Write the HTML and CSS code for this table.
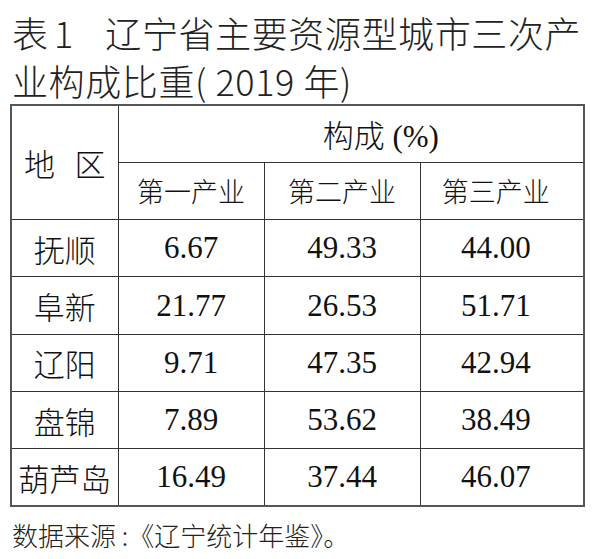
FILE: index.html
```html
<!DOCTYPE html>
<html lang="zh-CN">

<head>
    <meta charset="UTF-8">
    <meta name="viewport" content="width=device-width, initial-scale=1.0">
    <title>辽宁省主要资源型城市三次产业构成比重</title>
    <link rel="stylesheet" href="styles.css">
</head>

<body>

    <h2 class="title">
        <span class="num">表</span><span class="digit">1</span><span class="name">辽宁省主要资源型城市三次产</span>
        <span class="name">业构成比重( 2019 年)</span>
    </h2>

    <table class="data">
        <colgroup>
            <col class="c1">
            <col class="c2">
            <col class="c3">
            <col class="c4">
        </colgroup>
        <tr>
            <th rowspan="2" class="area">地 区</th>
            <th colspan="3" class="group">构成 (%)</th>
        </tr>
        <tr class="sub">
            <th>第一产业</th>
            <th>第二产业</th>
            <th class="last">第三产业</th>
        </tr>
        <tr>
            <td class="city">抚顺</td>
            <td>6.67</td>
            <td>49.33</td>
            <td class="last">44.00</td>
        </tr>
        <tr>
            <td class="city">阜新</td>
            <td>21.77</td>
            <td>26.53</td>
            <td class="last">51.71</td>
        </tr>
        <tr>
            <td class="city">辽阳</td>
            <td>9.71</td>
            <td>47.35</td>
            <td class="last">42.94</td>
        </tr>
        <tr>
            <td class="city">盘锦</td>
            <td>7.89</td>
            <td>53.62</td>
            <td class="last">38.49</td>
        </tr>
        <tr>
            <td class="city">葫芦岛</td>
            <td>16.49</td>
            <td>37.44</td>
            <td class="last">46.07</td>
        </tr>
    </table>

    <p class="source">数据来源 :《辽宁统计年鉴》。</p>

</body>

</html>
```

FILE: styles.css
```css
* {
    margin: 0;
    padding: 0;
    box-sizing: border-box;
}

body {
    width: 600px;
    height: 559px;
    padding: 0 10px;
    background: #fff;
    color: #1a1a1a;
    overflow: hidden;
}

.title {
    display: flex;
    flex-wrap: wrap;
    align-items: baseline;
    padding: 8px 0 0 2px;
    font-family: "Noto Sans CJK SC", sans-serif;
    font-size: 36px;
    font-weight: 300;
    line-height: 48px;
    color: #222;
}

.title .digit {
    margin-left: 6px;
    margin-right: 32px;
}

.title .name {
    letter-spacing: 0.6px;
    white-space: nowrap;
}

.data {
    width: 573px;
    border-collapse: collapse;
    table-layout: fixed;
    border: 2px solid #555;
    font-family: "Liberation Serif", "Noto Sans CJK SC", serif;
    font-weight: 300;
    color: #111;
}

.c1 {
    width: 107px;
}

.c2 {
    width: 146px;
}

.c3 {
    width: 156px;
}

.c4 {
    width: 164px;
}

th,
td {
    border: 1px solid #333;
    height: 57.3px;
    text-align: center;
    vertical-align: middle;
    font-weight: 300;
}

td {
    font-size: 31px;
}

th {
    font-size: 27px;
}

.area {
    font-size: 31px;
    word-spacing: 12px;
}

.group {
    font-size: 31px;
    padding-left: 60px;
}

.last {
    padding-right: 12px;
}

.city {
    font-size: 31px;
}

.source {
    margin-top: 10px;
    padding-left: 2px;
    font-family: "Noto Sans CJK SC", sans-serif;
    font-size: 26px;
    font-weight: 300;
    line-height: 36px;
    color: #222;
}
```
